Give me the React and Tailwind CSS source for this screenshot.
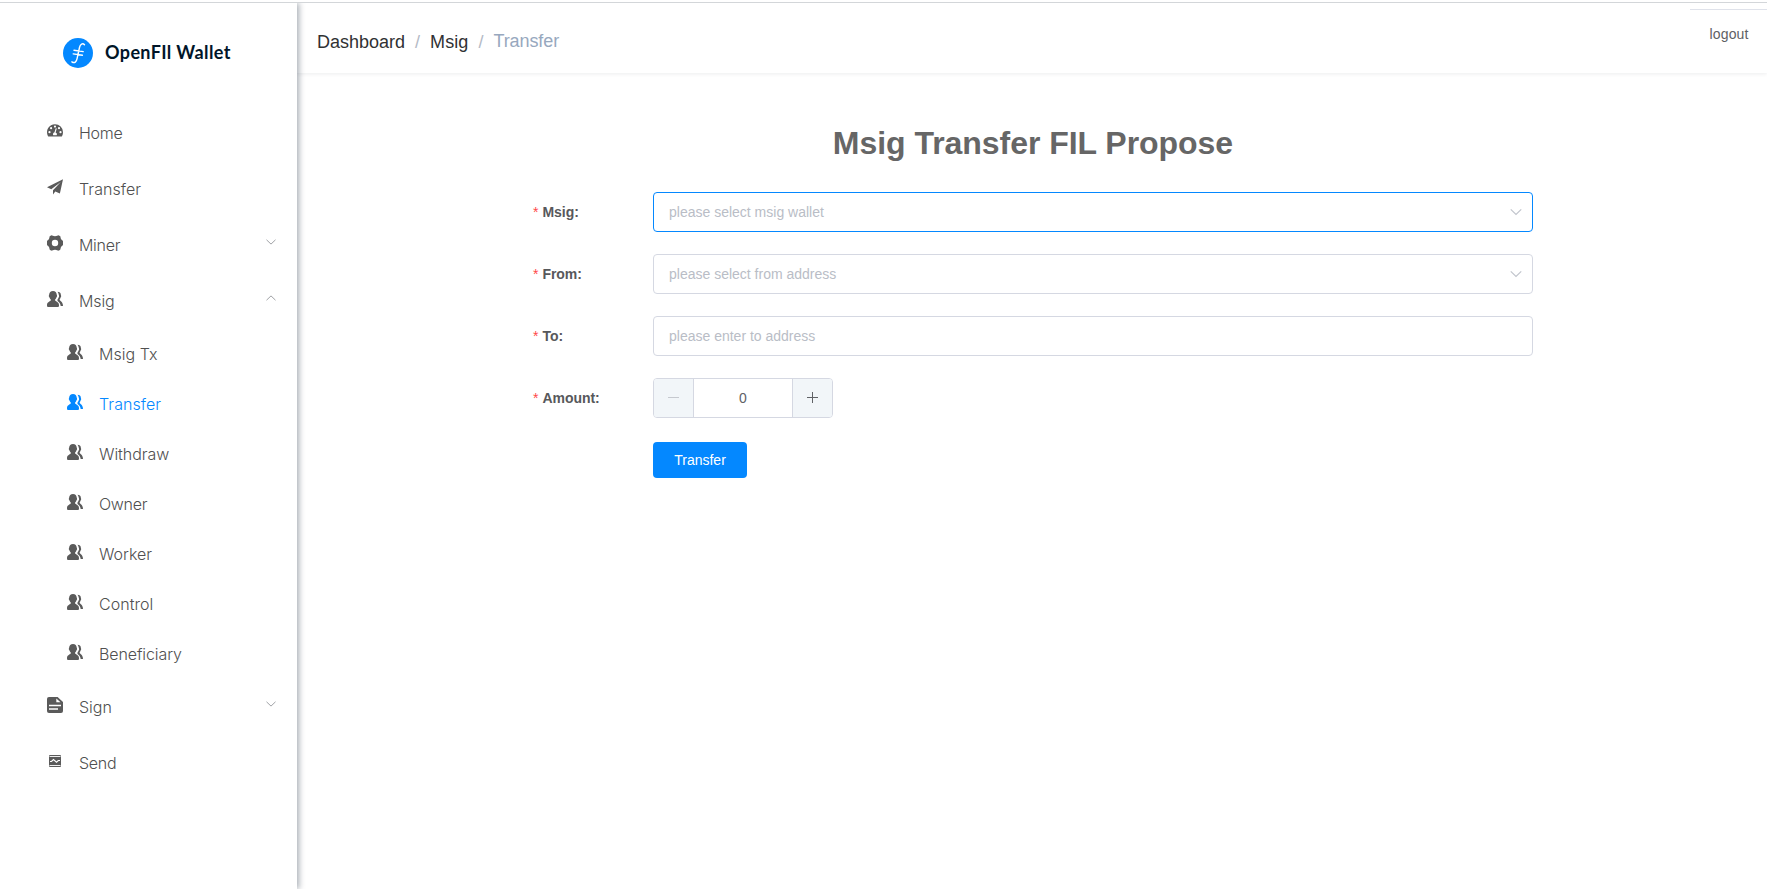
const sans = "font-['Liberation_Sans',Arial,sans-serif]";

function HomeIcon() {
  return (
    <svg viewBox="0 0 16 16" className="size-4 shrink-0" fill="currentColor">
      <path
        fillRule="evenodd"
        d="M8 1.200a8 8 0 0 1 8 8c0 1.300-.3 2.600-.9 3.700-.2.500-.5.700-.9.700H1.800c-.4 0-.7-.2-.9-.7A8 8 0 0 1 8 1.200zM8 2.500a1.100 1.100 0 1 0 0 2.200 1.100 1.100 0 0 0 0-2.200zM4.100 4.100a1.100 1.100 0 1 0 0 2.200 1.100 1.100 0 0 0 0-2.200zM2.500 8.100a1.100 1.100 0 1 0 0 2.200 1.100 1.100 0 0 0 0-2.200zM13.500 8.100a1.100 1.100 0 1 0 0 2.200 1.100 1.100 0 0 0 0-2.200zM12 4.100a1.100 1.100 0 1 0 0 2.200 1.100 1.100 0 0 0 0-2.200zM8.700 5.200 7.500 9.300a1.900 1.900 0 0 0-1.200 2.900h3.300a1.900 1.900 0 0 0-1-2.700l1.200-4.100z"
      />
    </svg>
  );
}

function PlaneIcon() {
  return (
    <svg viewBox="0 0 16 16" className="size-4 shrink-0" fill="currentColor">
      <path d="M16 .2 0 8.300l4.300 2L13.800 3 6 11.200v4.400l2.300-3.200 4.600 2z" />
    </svg>
  );
}

function GearIcon() {
  return (
    <svg viewBox="0 0 16 16" className="size-4 shrink-0" fill="currentColor">
      <path
        fillRule="evenodd"
        d="M4.200.4C5.200 0 5.800 1.200 8 1.200S10.800 0 11.800.4l1.200.7c.8.600.3 1.500 1 2.800.8 1.200 1.900 1.400 2 2.300v3.600c-.1.900-1.200 1.100-2 2.300-.7 1.300-.2 2.200-1 2.800l-1.200.7c-1 .4-1.600-.8-3.800-.8s-2.800 1.200-3.800.8L3 14.900c-.8-.6-.3-1.500-1-2.800-.8-1.200-1.900-1.400-2-2.300V6.200c.1-.9 1.200-1.100 2-2.300.7-1.300.2-2.200 1-2.800zM8 4.800a3.200 3.200 0 1 0 0 6.400 3.200 3.200 0 0 0 0-6.400z"
      />
    </svg>
  );
}

function UsersIcon() {
  return (
    <svg viewBox="0 0 16 16" className="size-4 shrink-0" fill="currentColor">
      <path d="M6 0c2.300 0 3.700 1.500 3.700 3.600 0 .5.4.7.4 1.300 0 .7-.5 1-.7 1.500-.3 1-.8 1.500-1.300 2v1.100c.5.800 3.900 1.400 3.900 4.500 0 1.300 0 2-1 2H1c-1 0-1-.7-1-2 0-3.100 3.300-3.700 3.800-4.500V8.400c-.5-.5-1-1-1.300-2-.2-.5-.7-.8-.7-1.500 0-.6.4-.8.4-1.300C2.200 1.500 3.700 0 6 0z" />
      <path d="M10.500.8c1.900 0 3.400 1.200 3.400 3.200 0 .4.300.6.300 1.200s-.4.800-.6 1.300c-.2.800-.5 1.200-.9 1.700v.9c.4.800 3.300 2 3.300 5.900h-2.300c-.4-2.400-1.300-3.800-3.200-4.900V8.500c.6-.7.9-1.300 1.100-2 .3-.4.500-.9.500-1.600 0-.6-.3-.9-.4-1.400-.1-1-.5-1.900-1.200-2.700z" />
    </svg>
  );
}

function DocIcon() {
  return (
    <svg viewBox="0 0 16 16" className="size-4 shrink-0">
      <path d="M2 0h8.600L16 5v9a2 2 0 0 1-2 2H2a2 2 0 0 1-2-2V2a2 2 0 0 1 2-2z" fill="currentColor" />
      <path d="M9.300 1.600v3.700h4.200z" fill="#fff" />
      <path d="M2 8.500h12M2 12h9" stroke="#fff" strokeWidth="1.300" fill="none" />
    </svg>
  );
}

function SendIcon() {
  return (
    <svg viewBox="0 0 16 16" className="size-4 shrink-0">
      <rect x="2" y="2" width="12" height="12" rx="1" fill="currentColor" />
      <path d="M2.500 3.500h11M2.500 12.500h11" stroke="#fff" strokeWidth=".9" />
      <path d="M3 8.500h1.500l2-2L9.500 9.200 11.300 7.500H13" stroke="#fff" strokeWidth="1.100" fill="none" />
    </svg>
  );
}

function Chevron({ up = false, className }) {
  return (
    <svg viewBox="0 0 12 12" className={className} fill="none" stroke="currentColor">
      <path d={up ? "M1.500 8.200 6 3.900l4.500 4.300" : "M1.500 3.800 6 8.100l4.500-4.300"} />
    </svg>
  );
}

const items = [
  { label: "Home", Icon: HomeIcon, tracking: "tracking-[-0.3px]" },
  { label: "Transfer", Icon: PlaneIcon, tracking: "tracking-[0.07px]" },
  { label: "Miner", Icon: GearIcon, arrow: "down", tracking: "tracking-[-0.3px]" },
  {
    label: "Msig",
    Icon: UsersIcon,
    arrow: "up",
    tracking: "tracking-[-0.1px]",
    children: [
      { label: "Msig Tx", tracking: "tracking-[0.05px]" },
      { label: "Transfer", tracking: "tracking-[0.07px]", active: true },
      { label: "Withdraw", tracking: "tracking-[-0.05px]" },
      { label: "Owner", tracking: "tracking-[-0.3px]" },
      { label: "Worker", tracking: "tracking-[-0.05px]" },
      { label: "Control", tracking: "tracking-[0.05px]" },
      { label: "Beneficiary", tracking: "tracking-[-0.1px]" },
    ],
  },
  { label: "Sign", Icon: DocIcon, arrow: "down", tracking: "tracking-[0px]" },
  { label: "Send", Icon: SendIcon, tracking: "tracking-[-0.3px]" },
];

function Sidebar() {
  return (
    <aside className="z-10 flex w-[297px] shrink-0 flex-col bg-white shadow-[2px_0_6px_rgba(0,21,41,0.35)]">
      <div className="flex h-[102px] items-start pt-[35px] pl-[63px]">
        <svg viewBox="0 0 30 30" className="size-[30px]">
          <circle cx="15" cy="15" r="15" fill="#0488ff" />
          <path
            d="M21.500 6.800c-1.800-2-4.300-.8-5 2.700l-2.300 10.700c-.7 3.700-2.600 5.400-5.300 3.600M11 12.300l9.200 1.300M10.200 15.900l9.200 1.300"
            fill="none"
            stroke="#fff"
            strokeWidth="1.400"
            strokeLinecap="round"
          />
        </svg>
        <span className="mt-px ml-3 font-['Lato',sans-serif] text-[18px] leading-[26px] font-bold tracking-[0.38px] whitespace-nowrap text-[#001529]">
          OpenFIl Wallet
        </span>
      </div>
      <nav className="font-['Inter',sans-serif] text-[16px] font-light text-[#505050]">
        {items.map(({ label, Icon, arrow, tracking, children }) => (
          <div key={label}>
            <div className="flex h-14 items-center pr-[20px] pl-[47px]">
              <div className="-mt-[5px] text-[#5a5a5a]"><Icon /></div>
              <span className={`ml-4 flex-1 ${tracking}`}>{label}</span>
              {arrow && <Chevron up={arrow === "up"} className="-mt-[6px] size-3 text-[#a0a2a6]" />}
            </div>
            {children?.map((child) => (
              <div
                key={child.label}
                className={`flex h-[50px] items-center pl-[67px] ${child.active ? "text-[#0488ff]" : ""}`}
              >
                <div className={`-mt-[5px] ${child.active ? "" : "text-[#5a5a5a]"}`}><UsersIcon /></div>
                <span className={`ml-4 ${child.tracking}`}>{child.label}</span>
              </div>
            ))}
          </div>
        ))}
      </nav>
    </aside>
  );
}

function Field({ label, children }) {
  return (
    <div className="flex h-10 items-center">
      <div className="flex w-[120px] gap-1 text-[14px] font-bold text-[#57585b]">
        <span className="font-normal text-[#ff4949]">*</span>
        <span className="tracking-[-0.05px]">{label}</span>
      </div>
      {children}
    </div>
  );
}

function Input({ text, active, select }) {
  return (
    <div
      className={`flex h-10 w-[880px] items-center justify-between rounded-[4px] border pr-[9.5px] pl-[15px] text-[14px] text-[#b9bdc6] ${active ? "border-[#0488ff]" : "border-[#d5d8e2]"}`}
    >
      <span>{text}</span>
      {select && <Chevron className="size-[14px] text-[#c0c4cc]" />}
    </div>
  );
}

export default function App() {
  return (
    <div className={`flex h-[889px] flex-col overflow-hidden bg-white pt-[2px] ${sans}`}>
      <div className="h-px shrink-0 bg-[#d3d6d9]" />
      <div className="flex min-h-0 flex-1 overflow-hidden">
        <Sidebar />
        <main className="flex flex-1 flex-col">
          <header className="flex h-[70px] items-start justify-between shadow-[0_1px_4px_rgba(0,21,41,0.08)]">
            <div className="flex pt-[28px] pl-5 text-[18px] leading-[22px] text-[#303133]">
              <span>Dashboard</span>
              <span className="mx-[10px] text-[#b4bac6]">/</span>
              <span className="tracking-[0.1px]">Msig</span>
              <span className="mx-[10px] text-[#b4bac6]">/</span>
              <span className="-mt-px tracking-[-0.1px] text-[#97a8be]">Transfer</span>
            </div>
            <div className="mt-[6px] w-[77px] border-t border-[#dfe2ea] pt-[14px] pl-[19.5px] text-[14px] leading-[20px] tracking-[0.15px] text-[#5e6064]">
              logout
            </div>
          </header>
          <div className="flex flex-col pl-[236px]">
            <h1 className="mt-[50px] w-[1000px] text-center text-[32px] leading-[40px] font-bold tracking-[-0.04px] text-[#666]">
              Msig Transfer FIL Propose
            </h1>
            <div className="mt-[29px] flex flex-col gap-[22px]">
              <Field label="Msig:"><Input text="please select msig wallet" active select /></Field>
              <Field label="From:"><Input text="please select from address" select /></Field>
              <Field label="To:"><Input text="please enter to address" /></Field>
              <Field label="Amount:">
                <div className="flex h-10 w-[180px] items-stretch overflow-hidden rounded-[4px] border border-[#d5d8e2] text-[14px] text-[#606266]">
                  <div className="flex w-10 items-center justify-center border-r border-[#d5d8e2] bg-[#f2f6f9]">
                    <svg viewBox="0 0 12 12" className="-mt-[2px] ml-px h-3 w-3 text-[#c6c9cf]" stroke="currentColor">
                      <path d="M0 6.500h11" />
                    </svg>
                  </div>
                  <div className="flex flex-1 items-center justify-center">0</div>
                  <div className="flex w-10 items-center justify-center border-l border-[#d5d8e2] bg-[#f2f6f9]">
                    <svg viewBox="0 0 12 12" className="-mt-[2px] ml-px h-3 w-3" stroke="currentColor">
                      <path d="M0 6.500h11M5.500 1v11" />
                    </svg>
                  </div>
                </div>
              </Field>
            </div>
            <button className="mt-6 ml-[120px] h-9 w-[94px] rounded-[4px] bg-[#0488ff] text-[14px] text-white">Transfer</button>
          </div>
        </main>
      </div>
    </div>
  );
}
